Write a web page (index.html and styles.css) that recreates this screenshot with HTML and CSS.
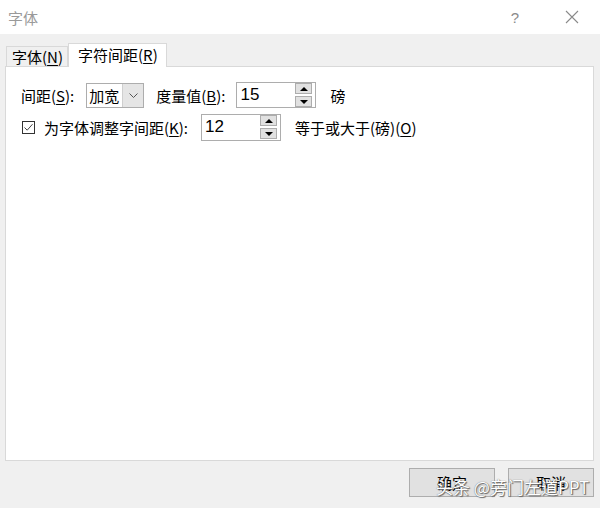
FILE: index.html
```html
<!DOCTYPE html>
<html lang="zh-CN">
  <head>
    <meta charset="UTF-8" />
    <title>字体</title>
    <link rel="stylesheet" href="styles.css">
  </head>
  <body>
    <div class="window">
      <div class="titlebar">
        <span class="title">字体</span>
        <span class="title-btn help">?</span>
        <span class="title-btn close">
          <svg width="14" height="14" viewBox="0 0 14 14"><path d="M1 1 L13 13 M13 1 L1 13" stroke="#8a8a8a" stroke-width="1.1" fill="none"/></svg>
        </span>
      </div>

      <div class="dialog">
        <div class="tabs">
          <div class="tab">字体(<u>N</u>)</div>
          <div class="tab active">字符间距(<u>R</u>)</div>
        </div>

        <div class="panel">
          <div class="row row-first">
            <label class="lbl">间距(<u>S</u>):</label>
            <div class="combo">
              <span class="combo-text">加宽</span>
              <span class="combo-arrow">
                <svg width="9" height="5" viewBox="0 0 9 5"><path d="M0.5 0.5 L4.5 4.5 L8.5 0.5" stroke="#555" fill="none"/></svg>
              </span>
            </div>
            <label class="lbl lbl-measure">度量值(<u>B</u>):</label>
            <div class="spin">
              <span class="spin-text">15</span>
              <div class="spin-btns">
                <span class="spin-btn"><svg width="8" height="4" viewBox="0 0 8 4"><path d="M0 4 L4 0 L8 4 Z" fill="#000"/></svg></span>
                <span class="spin-btn"><svg width="8" height="4" viewBox="0 0 8 4"><path d="M0 0 L4 4 L8 0 Z" fill="#000"/></svg></span>
              </div>
            </div>
            <span class="unit">磅</span>
          </div>

          <div class="row row-second">
            <span class="checkbox">
              <svg width="11" height="11" viewBox="0 0 11 11"><path d="M1.5 5.5 L4.2 8.2 L9.5 2.2" stroke="#444" stroke-width="1" fill="none"/></svg>
            </span>
            <label class="lbl lbl-kern">为字体调整字间距(<u>K</u>):</label>
            <div class="spin spin-kern">
              <span class="spin-text">12</span>
              <div class="spin-btns">
                <span class="spin-btn"><svg width="8" height="4" viewBox="0 0 8 4"><path d="M0 4 L4 0 L8 4 Z" fill="#000"/></svg></span>
                <span class="spin-btn"><svg width="8" height="4" viewBox="0 0 8 4"><path d="M0 0 L4 4 L8 0 Z" fill="#000"/></svg></span>
              </div>
            </div>
            <span class="unit">等于或大于(磅)(<u>O</u>)</span>
          </div>
        </div>

        <div class="footer">
          <button class="btn">确定</button>
          <button class="btn">取消</button>
        </div>
      </div>

      <div class="watermark">头条 @旁门左道PPT</div>
    </div>
  </body>
</html>
```

FILE: styles.css
```css
body {
  margin: 0;
  padding: 0;
  font-family: "Noto Sans CJK SC", "Microsoft YaHei", "Liberation Sans", sans-serif;
  font-size: 15px;
  color: #000;
  background-color: #f0f0f0;
}

.window {
  width: 600px;
  height: 508px;
  position: relative;
  overflow: hidden;
  background-color: #f0f0f0;
}

u {
  text-decoration: underline;
  text-underline-offset: 2px;
}

/* title bar */
.titlebar {
  height: 34px;
  background: #ffffff;
  display: flex;
  align-items: center;
}

.title {
  margin-left: 8px;
  color: #9a9a9a;
  font-size: 15px;
  flex: 1;
}

.title-btn {
  width: 46px;
  display: flex;
  justify-content: center;
  align-items: center;
  color: #8a8a8a;
}

.help {
  font-family: "Liberation Sans", sans-serif;
  font-size: 15px;
  margin-right: 11px;
}

.close {
  margin-right: 5px;
}

/* body */
.dialog {
  padding: 10px 6px 0 5px;
}

.tabs {
  display: flex;
  align-items: flex-end;
  height: 22px;
  padding-left: 1px;
  position: relative;
  z-index: 1;
}

.tab {
  height: 19px;
  line-height: 19px;
  padding: 0 4px 0 5px;
  border: 1px solid #d9d9d9;
  border-bottom: none;
  background: #f0f0f0;
}

.tab.active {
  height: 23px;
  line-height: 22px;
  margin-bottom: -1px;
  padding: 0 8px 0 9px;
  background: #ffffff;
}

.panel {
  height: 393px;
  background: #ffffff;
  border: 1px solid #d9d9d9;
  padding: 0 0 0 15px;
}

.row {
  display: flex;
  align-items: center;
}

.row-first {
  margin-top: 15px;
  height: 26px;
}

.row-second {
  margin-top: 5px;
  height: 28px;
}

.lbl {
  margin-right: 12px;
}

.lbl-measure {
  margin-left: 12px;
  margin-right: 11px;
}

.combo {
  width: 56px;
  height: 23px;
  border: 1px solid #adadad;
  display: flex;
  align-items: stretch;
}

.combo-text {
  flex: 1;
  padding-left: 2px;
  line-height: 23px;
}

.combo-arrow {
  width: 20px;
  background: #e5e5e5;
  border-left: 1px solid #cfcfcf;
  display: flex;
  justify-content: center;
  align-items: center;
}

.spin {
  width: 78px;
  height: 24px;
  border: 1px solid #adadad;
  display: flex;
  align-items: center;
  font-family: "Liberation Sans", sans-serif;
  font-size: 17px;
}

.spin-kern {
  height: 25px;
}

.spin-text {
  flex: 1;
  padding-left: 3px;
}

.spin-btns {
  display: flex;
  flex-direction: column;
  gap: 2px;
  margin-right: 3px;
}

.spin-btn {
  width: 15px;
  height: 9px;
  border: 1px solid #adadad;
  background: #e1e1e1;
  display: flex;
  justify-content: center;
  align-items: center;
}

.unit {
  margin-left: 14px;
}

.checkbox {
  width: 11px;
  height: 11px;
  border: 1px solid #333;
  display: flex;
  margin-left: 1px;
  margin-right: 9px;
}

.lbl-kern {
  margin-right: 13px;
}

/* footer */
.footer {
  display: flex;
  justify-content: flex-end;
  gap: 13px;
  padding-top: 7px;
}

.btn {
  width: 86px;
  height: 29px;
  border: 1px solid #adadad;
  background: #e1e1e1;
  font-family: inherit;
  font-size: 15px;
  color: #000;
  padding: 0;
}

.watermark {
  position: absolute;
  left: 436px;
  top: 474px;
  font-size: 17px;
  color: #ffffff;
  text-shadow: 0 0 1px #555, 1px 1px 1px #666;
}
```
